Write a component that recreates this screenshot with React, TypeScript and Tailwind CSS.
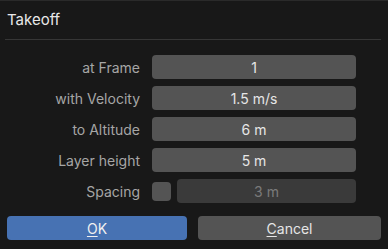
import React from 'react';

const font = { fontFamily: 'Inter, "Noto Sans", "DejaVu Sans", sans-serif' };

function Field({ label, value }: { label: string; value: string }) {
    return (
        <div className="flex items-center h-[24px]">
            <div className="w-[133px] text-right text-[14px] text-[#a6a6a6]">{label}</div>
            <div className="ml-[12px] w-[204px] h-[24px] rounded-[4px] bg-[#545454] flex items-center justify-center text-[14px] text-[#e6e6e6]">
                {value}
            </div>
        </div>
    );
}

export default function App() {
    return (
        <div className="w-[388px] h-[249px] bg-[#181818] border-t border-[#2a2a2a] flex flex-col" style={font}>
            {/* Title */}
            <div className="h-[38px] flex items-center px-[7px] text-[15px] text-[#e8e8e8]">Takeoff</div>
            <div className="mx-[5px] w-[376px] h-px bg-[#363636]" />

            {/* Properties */}
            <div className="flex flex-col gap-[7px] mt-[15px] pl-[7px]">
                <Field label="at Frame" value="1" />
                <Field label="with Velocity" value="1.5 m/s" />
                <Field label="to Altitude" value="6 m" />
                <Field label="Layer height" value="5 m" />
                <div className="flex items-center h-[24px]">
                    <div className="w-[133px] text-right text-[14px] text-[#a6a6a6]">Spacing</div>
                    <div className="ml-[12px] w-[19px] h-[19px] rounded-[4px] bg-[#545454]" />
                    <div className="ml-[6px] w-[179px] h-[24px] rounded-[4px] bg-[#3a3a3a] flex items-center justify-center text-[14px] text-[#7a7a7a]">
                        3 m
                    </div>
                </div>
            </div>

            {/* Buttons */}
            <div className="flex mt-[13px] px-[7px] gap-[11px]">
                <button className="w-[180px] h-[24px] rounded-[4px] bg-[#4772b3] text-[14px] text-[#f0f0f0]">
                    <span className="underline underline-offset-2">O</span>K
                </button>
                <button className="w-[183px] h-[24px] rounded-[4px] bg-[#545454] text-[14px] text-[#e6e6e6]">
                    <span className="underline underline-offset-2">C</span>ancel
                </button>
            </div>
        </div>
    );
}
